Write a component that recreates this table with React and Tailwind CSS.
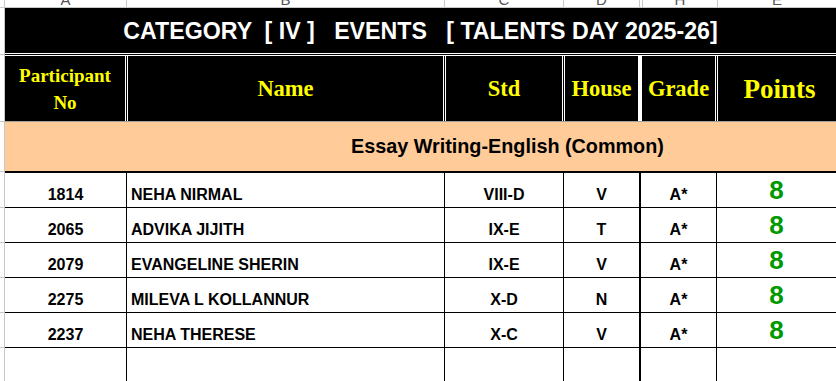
import React from "react";

const rows = [
  ["1814", "NEHA NIRMAL", "VIII-D", "V", "A*", "8"],
  ["2065", "ADVIKA JIJITH", "IX-E", "T", "A*", "8"],
  ["2079", "EVANGELINE SHERIN", "IX-E", "V", "A*", "8"],
  ["2275", "MILEVA L KOLLANNUR", "X-D", "N", "A*", "8"],
  ["2237", "NEHA THERESE", "X-C", "V", "A*", "8"],
];

function ColHead({ w, label, extra = "" }) {
  return (
    <div className={`${w} ${extra} h-full border-r border-[#c8c8c8] flex justify-center overflow-hidden shrink-0`}>
      <span className="text-[15px] leading-[15px] -mt-[8px] text-[#555]">{label}</span>
    </div>
  );
}

export default function App() {
  return (
    <div className="w-[836px] h-[381px] overflow-hidden bg-white flex flex-col font-['Liberation_Sans',Arial,sans-serif]">
      {/* column header strip */}
      <div className="h-[8px] flex border-b border-[#c8c8c8] shrink-0">
        <div className="w-[5px] h-full border-r border-[#c8c8c8] shrink-0" />
        <ColHead w="w-[122px]" label="A" />
        <ColHead w="w-[318px]" label="B" />
        <ColHead w="w-[119px]" label="C" />
        <ColHead w="w-[76px]" label="D" />
        <ColHead w="w-[3px]" label="" />
        <ColHead w="w-[75px]" label="H" />
        <div className="flex-1 h-full flex justify-center overflow-hidden">
          <span className="text-[15px] leading-[15px] -mt-[8px] text-[#555]">E</span>
        </div>
      </div>

      <div className="flex flex-1 min-h-0">
        {/* row header strip */}
        <div className="w-[5px] shrink-0 border-r border-[#c8c8c8] flex flex-col">
          <div className="h-[47px] border-b border-[#c8c8c8]" />
          <div className="h-[67px] border-b border-[#c8c8c8]" />
          <div className="h-[50px] border-b border-[#c8c8c8]" />
          <div className="h-[36px] border-b border-[#c8c8c8]" />
          <div className="h-[35px] border-b border-[#c8c8c8]" />
          <div className="h-[35px] border-b border-[#c8c8c8]" />
          <div className="h-[35px] border-b border-[#c8c8c8]" />
          <div className="h-[35px] border-b border-[#c8c8c8]" />
        </div>

        <div className="flex-1 flex flex-col min-w-0">
          {/* title */}
          <div className="h-[48px] shrink-0 bg-black border-b-[3px] border-double border-white flex items-center justify-center pt-[3px]">
            <span className="text-white font-bold text-[23.2px] whitespace-pre leading-none">
              {"CATEGORY  [ IV ]   EVENTS   [ TALENTS DAY 2025-26]"}
            </span>
          </div>

          {/* header row */}
          <div className="h-[66px] shrink-0 bg-black border-b border-[#a0a0a0] flex font-['Liberation_Serif','Times_New_Roman',serif] font-bold text-[#ffff00]">
            <div className="w-[123px] shrink-0 border-r-[3px] border-double border-white flex items-center justify-center text-center text-[19px] leading-[27px] pt-[1px]">
              Participant<br />No
            </div>
            <div className="w-[318px] shrink-0 border-r-[3px] border-double border-white flex items-center justify-center text-[22.5px]">
              Name
            </div>
            <div className="w-[119px] shrink-0 border-r-[3px] border-double border-white flex items-center justify-center text-[22.5px]">
              Std
            </div>
            <div className="w-[77px] shrink-0 border-r-[4px] border-white flex items-center justify-center text-[22.5px]">
              House
            </div>
            <div className="w-[76px] shrink-0 border-r-[3px] border-double border-white flex items-center justify-center text-[22.5px]">
              Grade
            </div>
            <div className="flex-1 flex items-center justify-center pl-[5px] pt-[2px] text-[27px]">
              Points
            </div>
          </div>

          {/* event row */}
          <div className="h-[51px] shrink-0 bg-[#ffcc99] border-b-2 border-black flex items-center pl-[346px]">
            <span className="font-bold text-[19.8px] text-black whitespace-nowrap">Essay Writing-English (Common)</span>
          </div>

          {/* data rows */}
          {rows.map((r, i) => (
            <div key={i} className="h-[35px] shrink-0 border-b border-black flex font-bold text-black text-[16px] leading-[18px]">
              <div className="w-[122px] shrink-0 border-r border-black flex items-end justify-center pb-[3px]">{r[0]}</div>
              <div className="w-[318px] shrink-0 border-r border-black flex items-end pl-[4px] pb-[3px] whitespace-nowrap">{r[1]}</div>
              <div className="w-[119px] shrink-0 border-r border-black flex items-end justify-center pb-[3px]">{r[2]}</div>
              <div className="w-[77px] shrink-0 border-r-2 border-black flex items-end justify-center pb-[3px]">{r[3]}</div>
              <div className="w-[76px] shrink-0 border-r border-black flex items-end justify-center pb-[3px]">{r[4]}</div>
              <div className="flex-1 flex items-center justify-center text-[26px] leading-[26px] text-[#009900]">{r[5]}</div>
            </div>
          ))}
          <div className="flex-1 flex">
            <div className="w-[122px] shrink-0 border-r border-black" />
            <div className="w-[318px] shrink-0 border-r border-black" />
            <div className="w-[119px] shrink-0 border-r border-black" />
            <div className="w-[77px] shrink-0 border-r-2 border-black" />
            <div className="w-[76px] shrink-0 border-r border-black" />
            <div className="flex-1" />
          </div>
        </div>
      </div>
    </div>
  );
}
